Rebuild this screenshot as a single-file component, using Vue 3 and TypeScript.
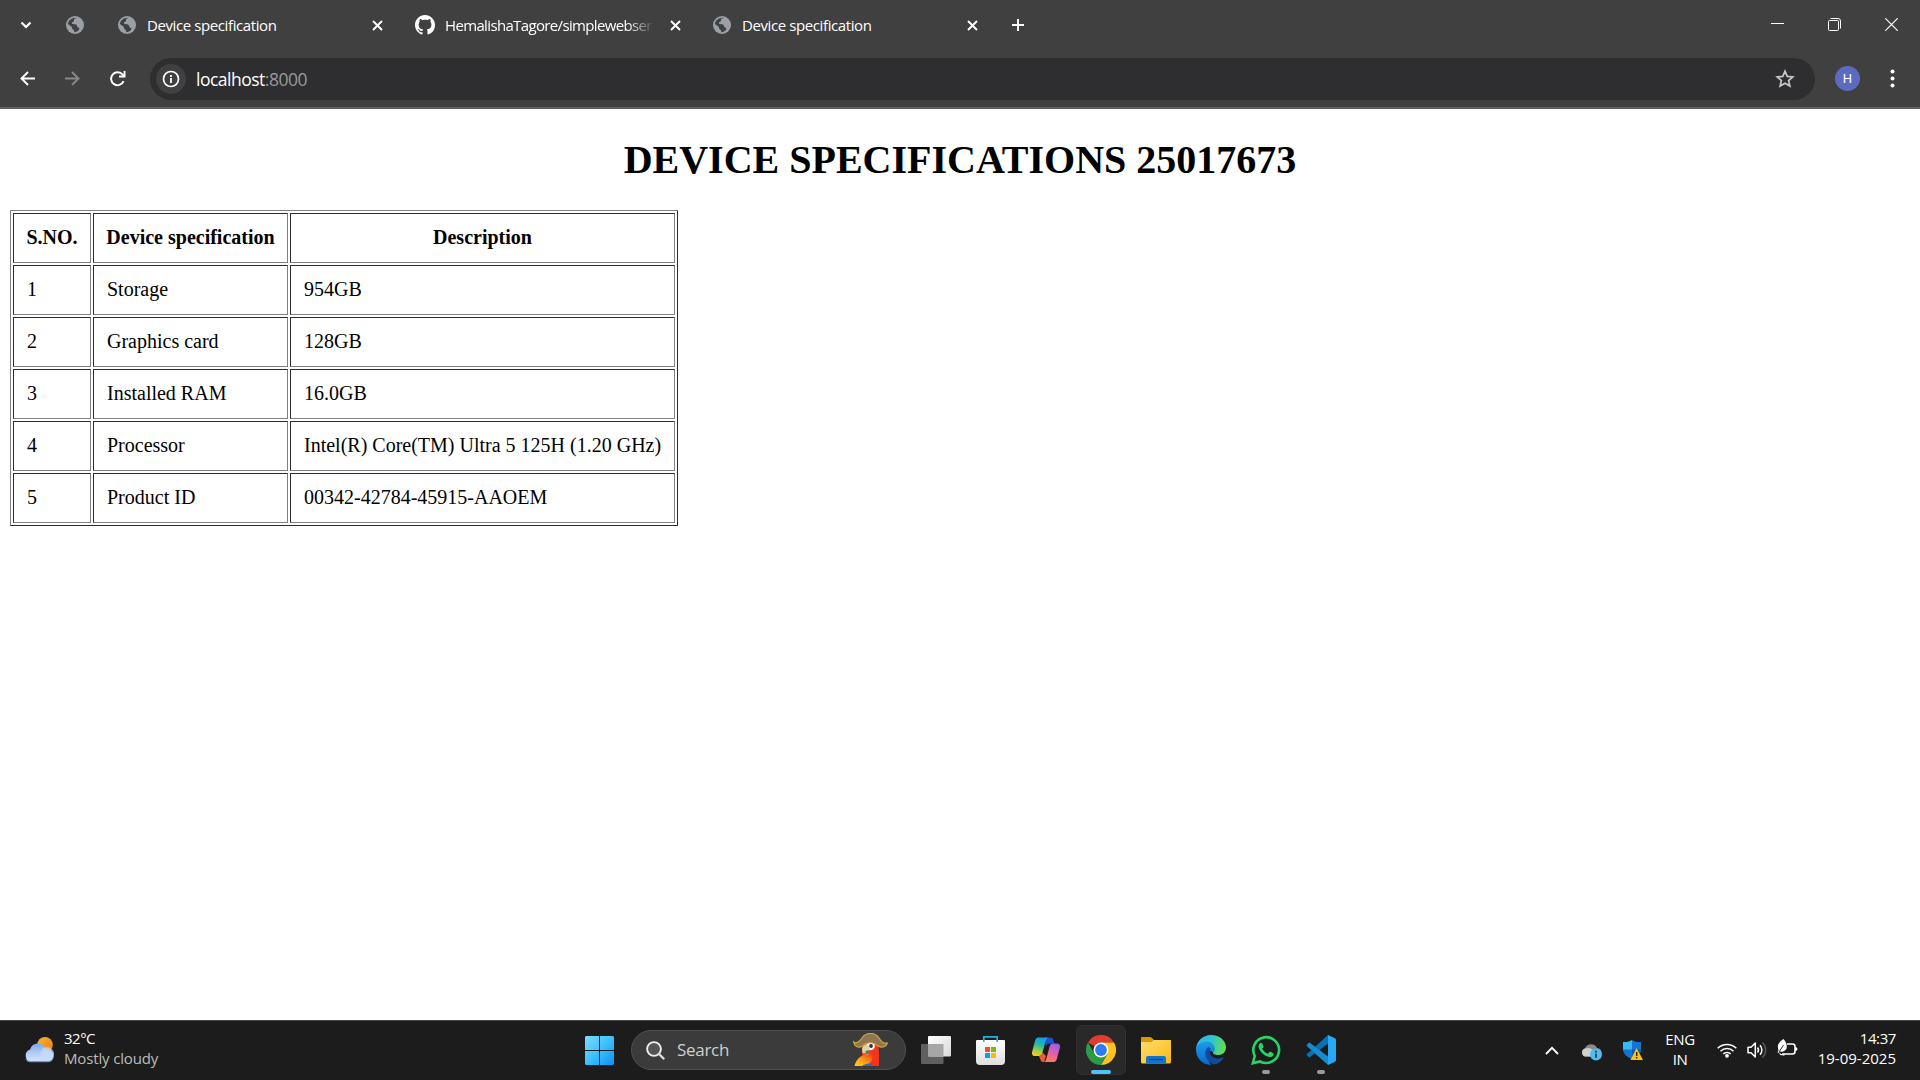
<script setup lang="ts">
interface Tab { kind: 'globe' | 'github'; title: string; cls: string }
interface Spec { no: number; name: string; value: string }

const tabs: Tab[] = [
  { kind: 'globe', title: 'Device specification', cls: 'first' },
  { kind: 'github', title: 'HemalishaTagore/simplewebser', cls: 'second' },
  { kind: 'globe', title: 'Device specification', cls: 'third' },
]

const specs: Spec[] = [
  { no: 1, name: 'Storage', value: '954GB' },
  { no: 2, name: 'Graphics card', value: '128GB' },
  { no: 3, name: 'Installed RAM', value: '16.0GB' },
  { no: 4, name: 'Processor', value: 'Intel(R) Core(TM) Ultra 5 125H (1.20 GHz)' },
  { no: 5, name: 'Product ID', value: '00342-42784-45915-AAOEM' },
]
</script>

<template>
  <div class="screen">
    <header class="chrome">
      <div class="strip">
        <svg class="chev" width="12" height="8" viewBox="0 0 12 8"><path d="M1.500 1.500 6 6l4.500-4.500" fill="none" stroke="#fff" stroke-width="2.200" /></svg>
        <svg class="globe pinned" width="18" height="18" viewBox="0 0 18 18">
          <circle cx="9" cy="9" r="9" fill="#9aa0a6" />
          <path d="M10.500 1.900C8.500 2.300 7.500 3.400 8 4.600c.5 1.200-2.300 1-2 2.700.3 1.300 3.300.5 4.500 1.700 1 1 .3 2.400 1.700 2.500.9.100 1.500.8 1 1.700-1.300 2.300-3.500 3.100-5.200 3 .8-1.400-.2-2.500-1.300-3-1-.5-.3-2.200-1.400-2.800L1.900 8.100C2.300 4.700 5.500 1.500 10.500 1.900z" fill="#404040" />
        </svg>
        <div v-for="(tab, i) in tabs" :key="i" class="tab" :class="tab.cls">
          <svg v-if="tab.kind === 'globe'" class="globe" width="18" height="18" viewBox="0 0 18 18">
            <circle cx="9" cy="9" r="9" fill="#9aa0a6" />
            <path d="M10.500 1.900C8.500 2.300 7.500 3.400 8 4.600c.5 1.200-2.300 1-2 2.700.3 1.300 3.300.5 4.500 1.700 1 1 .3 2.400 1.700 2.500.9.100 1.500.8 1 1.700-1.300 2.300-3.500 3.100-5.200 3 .8-1.400-.2-2.500-1.300-3-1-.5-.3-2.200-1.400-2.800L1.900 8.100C2.300 4.700 5.500 1.500 10.500 1.900z" fill="#404040" />
          </svg>
          <svg v-else class="octo" width="20" height="20" viewBox="0 0 16 16"><path fill="#fff" d="M8 0C3.580 0 0 3.580 0 8c0 3.540 2.290 6.530 5.470 7.590.4.070.55-.17.55-.38 0-.19-.01-.82-.01-1.490-2.010.37-2.530-.49-2.690-.94-.09-.23-.48-.94-.82-1.130-.28-.15-.68-.52-.01-.53.63-.01 1.080.58 1.230.82.72 1.210 1.870.87 2.330.66.070-.52.28-.87.51-1.070-1.780-.2-3.640-.89-3.640-3.950 0-.87.31-1.590.82-2.150-.08-.2-.36-1.020.08-2.120 0 0 .67-.21 2.200.82.64-.18 1.320-.27 2-.27s1.360.09 2 .27c1.530-1.040 2.200-.82 2.200-.82.44 1.100.16 1.920.08 2.120.51.56.82 1.270.82 2.150 0 3.070-1.870 3.750-3.650 3.950.29.25.54.73.54 1.480 0 1.070-.01 1.930-.01 2.200 0 .21.15.46.55.38A8.010 8.010 0 0 0 16 8c0-4.420-3.580-8-8-8z" /></svg>
          <span class="tab-title">{{ tab.title }}</span>
          <svg class="tab-x" width="11" height="11" viewBox="0 0 11 11"><path d="M1 1l9 9M10 1l-9 9" stroke="#fff" stroke-width="1.900" /></svg>
        </div>
        <svg class="plus" width="12" height="12" viewBox="0 0 12 12"><path d="M6 0v12M0 6h12" stroke="#fff" stroke-width="1.900" /></svg>
        <div class="winbtns">
          <svg width="13" height="13" viewBox="0 0 13 13"><path d="M0 5.500h13" stroke="#fff" /></svg>
          <svg width="13" height="13" viewBox="0 0 13 13"><path d="M2.500.5h7.500a2.500 2.500 0 0 1 2.500 2.500v7.500" fill="none" stroke="#fff" /><rect x=".5" y="2.500" width="10" height="10" rx="1" fill="none" stroke="#fff" /></svg>
          <svg width="13" height="13" viewBox="0 0 13 13"><path d="M.3.3l12.400 12.400M12.700.3.3 12.700" stroke="#fff" stroke-width="1.200" /></svg>
        </div>
      </div>
      <div class="toolbar">
        <svg class="nav" width="15" height="15" viewBox="0 0 15 15"><path d="M15 7.500H1.500M8 1 1.500 7.500 8 14" fill="none" stroke="#fff" stroke-width="1.900" /></svg>
        <svg class="nav" width="15" height="15" viewBox="0 0 15 15"><path d="M0 7.500h13.500M7 1l6.500 6.500L7 14" fill="none" stroke="#878787" stroke-width="1.900" /></svg>
        <svg class="nav" width="16" height="16" viewBox="0 0 16 16"><path d="M13.600 10.200A6.500 6.500 0 1 1 12.700 3.600L14 5" fill="none" stroke="#fff" stroke-width="2" /><path d="M15.500 0v6.500H9V4.600h4.600V0z" fill="#fff" /></svg>
        <div class="omnibox">
          <span class="info"><svg width="18" height="18" viewBox="0 0 18 18"><circle cx="9" cy="9" r="7.500" fill="none" stroke="#fff" stroke-width="1.700" /><path d="M9 8v5M9 5v1.900" stroke="#fff" stroke-width="1.800" /></svg></span>
          <span class="url">localhost<span class="port">:8000</span></span>
          <svg class="star" width="20" height="20" viewBox="0 0 20 20"><path d="M10 2.200l2.200 5.200 5.600.5-4.200 3.700 1.300 5.500L10 14.200l-4.900 2.900 1.300-5.500L2.200 7.900l5.600-.5z" fill="none" stroke="#c7c7c7" stroke-width="1.700" /></svg>
        </div>
        <span class="avatar">H</span>
        <svg class="dots" width="5" height="19" viewBox="0 0 5 19"><g fill="#fff"><circle cx="2.500" cy="2.500" r="2" /><circle cx="2.500" cy="9.500" r="2" /><circle cx="2.500" cy="16.500" r="2" /></g></svg>
      </div>
    </header>

    <main class="page">
      <h1>DEVICE SPECIFICATIONS 25017673</h1>
      <table>
        <colgroup><col class="c1" /><col class="c2" /><col class="c3" /></colgroup>
        <thead><tr><th>S.NO.</th><th>Device specification</th><th>Description</th></tr></thead>
        <tbody>
          <tr v-for="s in specs" :key="s.no"><td>{{ s.no }}</td><td>{{ s.name }}</td><td>{{ s.value }}</td></tr>
        </tbody>
      </table>
    </main>

    <footer class="taskbar">
      <div class="weather">
        <svg width="30" height="26" viewBox="0 0 30 26">
          <defs>
            <linearGradient id="sun" x1="0" y1="0" x2="1" y2="1"><stop offset="0" stop-color="#f9b52c" /><stop offset="1" stop-color="#ee7b10" /></linearGradient>
            <linearGradient id="cl" x1="0" y1="0" x2="0" y2="1"><stop offset="0" stop-color="#7fa8ee" /><stop offset=".55" stop-color="#b5cdf8" /><stop offset="1" stop-color="#d9e6fb" /></linearGradient>
          </defs>
          <circle cx="21" cy="7.800" r="7.800" fill="url(#sun)" />
          <path d="M7 25a6.500 6.500 0 0 1-1-12.500 8.500 8.500 0 0 1 16-.5 6.500 6.500 0 0 1 1.500 13z" fill="url(#cl)" />
          <path d="M16 16a7 7 0 0 1 14 2.500 6.500 6.500 0 0 1-6.500 6.500H7C14 24 21 22 16 16z" fill="#c9dbfb" opacity=".7" />
          <path d="M1 21a6 6 0 0 0 6 4.200h16.500a6 6 0 0 0 6-4.200 7 7 0 0 1-6 3H7a7 7 0 0 1-6-3z" fill="#6f93dc" />
        </svg>
        <div class="wtext"><span class="w1">32°C</span><span class="w2">Mostly cloudy</span></div>
      </div>

      <div class="apps">
        <svg class="start" width="29" height="29" viewBox="0 0 29 29">
          <defs><linearGradient id="win" gradientUnits="userSpaceOnUse" x1="0" y1="0" x2="29" y2="29"><stop offset="0" stop-color="#7cdcff" /><stop offset=".5" stop-color="#3cc1fb" /><stop offset="1" stop-color="#0a90f6" /></linearGradient></defs>
          <path d="M1 0h13v14H0V1zM15 0h13l1 1v13H15zM0 15h14v14H1l-1-1zM15 15h14v13l-1 1H15z" fill="url(#win)" />
        </svg>
        <div class="search">
          <svg class="mag" width="19" height="19" viewBox="0 0 19 19"><circle cx="8" cy="8" r="6.900" fill="#555" stroke="#eee" stroke-width="1.900" /><path d="M13 13l4.500 4.500" stroke="#ddd" stroke-width="2.400" stroke-linecap="round" /></svg>
          <span class="stext">Search</span>
          <svg class="parrot" width="35" height="34" viewBox="0 0 35 34">
            <defs><linearGradient id="wing" x1="0" y1="1" x2="1" y2="0"><stop offset="0" stop-color="#ffd21f" /><stop offset=".45" stop-color="#ff9d17" /><stop offset="1" stop-color="#f0311a" /></linearGradient></defs>
            <path d="M10 12C11 7 22 6 25 12l1 7v14H14L9 22z" fill="#f2351d" />
            <path d="M1.500 33C3 26 8 21 19 20c2 5-1 11-7 13z" fill="url(#wing)" />
            <path d="M9 33c3-2 6-3 10-2l-1 2z" fill="#3268b4" />
            <circle cx="17.500" cy="13" r="4.300" fill="#fff" /><circle cx="18" cy="13" r="1.900" fill="#332c2c" />
            <path d="M14.500 12C10 11 8 15 9.700 20c1 1 2 .5 2.500-.5 1 3 3 3 4-.5 1-3 .5-6-1.700-7z" fill="#ded1a8" />
            <path d="M12.500 18c0 4 3 5 4.500-1z" fill="#716958" />
            <path d="M.7 9C3 11 6 9 9 5c4-6 13-6 17 0 2.500 4 5 6 8.300 5-1 3.500-5 5.500-9 3C20 8.500 14.500 8.500 9.500 13 6 15.500 1.500 14 .7 9z" fill="#8f7551" stroke="#d1a83a" stroke-width="1.200" />
          </svg>
        </div>
        <svg class="taskview" width="30" height="28" viewBox="0 0 30 28">
          <defs><linearGradient id="tv" x1="0" y1="0" x2="1" y2="1"><stop offset="0" stop-color="#fff" /><stop offset="1" stop-color="#d8d8d8" /></linearGradient></defs>
          <rect x="0" y="8" width="22.500" height="20" rx="1" fill="#606060" /><rect x="7" y="0" width="23" height="20.500" rx="1" fill="url(#tv)" /><path d="M7 8h15.500v12.500H8l-1-1z" fill="#a6a6a6" />
        </svg>
        <svg class="store" width="29" height="29" viewBox="0 0 29 29">
          <defs><linearGradient id="bag" x1="0" y1="0" x2="0" y2="1"><stop offset="0" stop-color="#fff" /><stop offset="1" stop-color="#dedede" /></linearGradient></defs>
          <path d="M0 5q0-1 1-1h27q1 0 1 1v20a4 4 0 0 1-4 4H4a4 4 0 0 1-4-4z" fill="url(#bag)" />
          <path d="M7.800 6V.8h13.400V6" fill="none" stroke="#24b1e0" stroke-width="1.700" />
          <path d="M9 11h5v5H9z" fill="#f25022" /><path d="M15 11h5v5h-5z" fill="#7fba00" /><path d="M9 17h5v5H9z" fill="#00a4ef" /><path d="M15 17h5v5h-5z" fill="#ffb900" />
        </svg>
        <svg class="copilot" width="28" height="26" viewBox="0 0 28 26">
          <defs>
            <linearGradient id="cpa" x1=".6" y1="0" x2=".3" y2="1"><stop offset="0" stop-color="#149ce9" /><stop offset=".4" stop-color="#22bba8" /><stop offset=".75" stop-color="#a4ce41" /><stop offset="1" stop-color="#ffc91c" /></linearGradient>
            <linearGradient id="cpb" x1=".7" y1="0" x2=".3" y2="1"><stop offset="0" stop-color="#9a5cf0" /><stop offset=".5" stop-color="#e45eac" /><stop offset="1" stop-color="#ff7f50" /></linearGradient>
          </defs>
          <path d="M13 .5h5c2 0 3 1 3.500 3l1 3h-5c-2 0-3 1-3.500 3z" fill="#1b54d0" />
          <path d="M6 .5h10c-1.500 1-2 2-2.500 4l-3 11C9.800 18 9 19 7 19H3c-2.500 0-3.500-2-2.800-4.500L3 4c.6-2.200 1.500-3.500 3-3.500z" fill="url(#cpa)" />
          <path d="M7 19c2 0 2.800-1 3.500-3.500L14 19l-2 6c-2 0-3-.5-3.600-2.500z" fill="#f15b34" />
          <path d="M22 25H12c1.500-1 2-2 2.500-4l3-11c.7-2.500 1.500-3.500 3.500-3.500h4c2.500 0 3.500 2 2.800 4.500L25 21.500c-.6 2.200-1.500 3.500-3 3.500z" fill="url(#cpb)" />
        </svg>
        <div class="active">
          <svg width="30" height="30" viewBox="0 0 30 30">
            <path d="M15 15 2 7.500A15 15 0 0 1 28 7.500H15z" fill="#e53a2e" />
            <path d="M15 7.500h13A15 15 0 0 1 15 30l6.500-11.300z" fill="#fcc31e" />
            <path d="M2 7.500A15 15 0 0 0 15 30l6.500-11.300L15 15 8.500 18.700z" fill="#2a9c48" />
            <circle cx="15" cy="15" r="7.500" fill="#fff" /><circle cx="15" cy="15" r="5.900" fill="#2c7bf0" />
          </svg>
          <i class="bar"></i>
        </div>
        <svg class="folder" width="30" height="27" viewBox="0 0 30 27">
          <defs><linearGradient id="fo" x1="0" y1="0" x2="1" y2="1"><stop offset="0" stop-color="#ffdc72" /><stop offset="1" stop-color="#fcb90f" /></linearGradient></defs>
          <path d="M0 1q0-1 1-1h8q1 0 2 1l2 2h16q1 0 1 1v6H0z" fill="#dd9706" /><path d="M0 5h10l3-2h16q1 0 1 1v21q0 1.500-1.500 1.500h-27Q0 26.500 0 25z" fill="url(#fo)" />
          <path d="M5 26.500V21q0-2 2-2h16q2 0 2 2v5.500z" fill="#1175cb" /><path d="M8 22.500h14" stroke="#0a4b8e" stroke-width="1.300" />
        </svg>
        <svg class="edge" width="30" height="30" viewBox="0 0 30 30">
          <defs>
            <linearGradient id="ea" x1="0" y1=".3" x2="1" y2=".5"><stop offset="0" stop-color="#2cb3ee" /><stop offset=".5" stop-color="#2fc5cf" /><stop offset="1" stop-color="#66dd4c" /></linearGradient>
            <linearGradient id="eb" x1="0" y1="0" x2="0" y2="1"><stop offset="0" stop-color="#1d9de8" /><stop offset="1" stop-color="#0768ca" /></linearGradient>
          </defs>
          <path d="M0 15C0 6.500 6.500 0 15 0c9 0 15 6 15 12.500 0 5-4 7.500-8 7.500-3 0-5.500-1-5-2.500 2-2.500.5-7.500-4-7.500z" fill="url(#ea)" />
          <path d="M0 15c.5-5 5-8.500 10.500-8.500 5 0 8.300 3.500 8.300 7 0 2-1 3-1.700 4C12 13 8 20 15 29.900 6.500 30 0 23 0 15z" fill="url(#eb)" />
          <path d="M11 13c-4 5-1 14 7 16.600 4-.6 8-3.500 9.500-6.500.4-.8-.2-1-.8-.7C20 25.500 12 21 14.500 14.500 15 12 12.500 11.500 11 13z" fill="#124b9a" />
        </svg>
        <div class="wa">
          <svg width="30" height="30" viewBox="0 0 24 24"><path fill="#25d366" d="M17.472 14.382c-.297-.149-1.758-.867-2.030-.967-.273-.099-.471-.148-.670.150-.197.297-.767.966-.940 1.164-.173.199-.347.223-.644.075-.297-.150-1.255-.463-2.390-1.475-.883-.788-1.480-1.761-1.653-2.059-.173-.297-.018-.458.130-.606.134-.133.298-.347.446-.520.149-.174.198-.298.298-.497.099-.198.050-.371-.025-.520-.075-.149-.669-1.612-.916-2.207-.242-.579-.487-.500-.669-.510-.173-.008-.371-.010-.570-.010-.198 0-.520.074-.792.372-.272.297-1.040 1.016-1.040 2.479 0 1.462 1.065 2.875 1.213 3.074.149.198 2.096 3.200 5.077 4.487.709.306 1.262.489 1.694.625.712.227 1.360.195 1.871.118.571-.085 1.758-.719 2.006-1.413.248-.694.248-1.289.173-1.413-.074-.124-.272-.198-.570-.347z" /><path fill="none" stroke="#25d366" stroke-width="2.100" d="M1.500 22.500l1.500-5.700A10.300 10.300 0 1 1 7.200 21.100z" /></svg>
          <i class="dot"></i>
        </div>
        <div class="code">
          <svg width="30" height="30" viewBox="0 0 30 30"><path d="M22 0 5 15.500l-4 3.200q-.8.500-.3 1.300l1.800 2q.8.700 1.600 0L22 8.500z" fill="#0b6fb5" /><path d="M22 30 1 11.300q-.8-.6-.2-1.400L2.500 8q.8-.8 1.700-.1L22 21.500z" fill="#168bd2" /><path d="M22 0l7 3.300q1 .5 1 1.600v20.200q0 1.100-1 1.600L22 30z" fill="#2aa8f5" /></svg>
          <i class="dot"></i>
        </div>
      </div>

      <div class="tray">
        <svg class="up" width="14" height="9" viewBox="0 0 14 9"><path d="M1 8l6-6.200L13 8" fill="none" stroke="#fff" stroke-width="1.800" /></svg>
        <svg class="cloud" width="21" height="18" viewBox="0 0 21 18"><path d="M4 13.500a4.200 4.200 0 0 1 0-8C6 0 14 0 16 5a4.500 4.500 0 0 1 2 8.500z" fill="#8a8a8a" /><path d="M4 13.500a4.200 4.200 0 0 1 0-8c4-1.500 7 0 9 3v5z" fill="#d0d0d0" /><circle cx="15" cy="11.500" r="6" fill="#50bdf2" /><path d="M15 10.500v4.300M15 7.800v1.700" stroke="#12364a" stroke-width="1.700" /></svg>
        <svg class="shield" width="20" height="21" viewBox="0 0 20 21"><path d="M9 0c3 2 6 2.300 9 2v7c0 5-4 8-9 10-5-2-9-5-9-10V2c3 .3 6 0 9-2z" fill="#1274d4" /><path d="M9 0v9.500H0V2c3 .3 6 0 9-2z" fill="#35b9f1" /><path d="M9 9.500h9c0 5-4 7.500-9 9.500z" fill="#0c59b0" /><path d="M13.500 8 20 20H7.500z" fill="#fcc21b" /><path d="M13.700 12v4M13.700 17v1.600" stroke="#3b2b00" stroke-width="1.500" /></svg>
        <div class="lang"><span>ENG</span><span>IN</span></div>
        <svg class="wifi" width="20" height="16" viewBox="0 0 20 16"><g fill="none" stroke="#fff" stroke-width="1.500"><path d="M.7 6.300a13 13 0 0 1 18.600 0M3.500 9.200a9.200 9.200 0 0 1 13 0M6.300 11.900a5.300 5.300 0 0 1 7.400 0" /></g><circle cx="10" cy="13.800" r="1.900" fill="#fff" /></svg>
        <svg class="vol" width="20" height="18" viewBox="0 0 20 18"><g fill="none" stroke="#fff" stroke-width="1.500"><path d="M1 6.200h3L8.300 2v14L4 11.800H1z" stroke-linejoin="round" /><path d="M10.500 6.500a4 4 0 0 1 0 5M13 4.200a7 7 0 0 1 0 9.600" /><path d="M15.500 1.500a10.500 10.500 0 0 1 0 15" stroke="#595959" /></g></svg>
        <svg class="batt" width="21" height="18" viewBox="0 0 21 18"><path d="M10 5h5.500A2.500 2.500 0 0 1 18 7.500v5a2.500 2.500 0 0 1-2.500 2.500H5" fill="none" stroke="#fff" stroke-width="1.600" /><path d="M18 8q2.500.2 2.500 2t-2.500 2z" fill="#fff" /><path d="M6.500 0C9 3 10.500 6 9.500 9.500 8.700 12 6 13 3 12.500L1.500 14 .5 13l1-1.500C0 7 1 3.500 6.500 0z" fill="#fff" /><path d="M2 13 6.500 6M5 15.800 4 13" stroke="#1c1c1c" stroke-width=".9" /><path d="M2.500 14.500c1 1.500 3 1.500 5 1.300" stroke="#fff" stroke-width="1.300" fill="none" /></svg>
        <div class="clock"><span class="k1">14:37</span><span class="k2">19-09-2025</span></div>
      </div>
    </footer>
  </div>
</template>

<style>
body { margin: 0; overflow: hidden; }
</style>

<style scoped>
.screen { width: 1920px; height: 1080px; display: flex; flex-direction: column; background: #fff; font-family: "Open Sans", "Noto Sans", sans-serif; overflow: hidden; }
svg { display: block; flex: none; }
.chrome { height: 107px; flex: none; background: #404040; border-bottom: 2px solid #636262; }
.strip { height: 50px; display: flex; align-items: center; }
.chev { margin-left: 20px; }
.pinned { margin-left: 34px; }
.tab { display: flex; align-items: center; color: #fff; font-size: 15px; white-space: nowrap; }
.tab.first { margin-left: 34px; }
.tab.second { margin-left: 32px; }
.tab.third { margin-left: 32px; }
.tab-title { width: 214px; margin-left: 11px; overflow: hidden; line-height: 24px; letter-spacing: -0.4px; }
.second .tab-title { width: 209px; margin-left: 10px; letter-spacing: -0.65px; -webkit-mask-image: linear-gradient(90deg, #000 87%, transparent 100%); mask-image: linear-gradient(90deg, #000 87%, transparent 100%); }
.tab-x { margin-left: 11px; }
.second .tab-x { margin-left: 16px; }
.plus { margin-left: 34px; }
.winbtns { display: flex; gap: 44px; margin-left: auto; margin-right: 22px; margin-bottom: 1px; }
.toolbar { height: 57px; display: flex; align-items: center; padding-left: 20px; }
.nav { margin-right: 30px; }
.nav:nth-child(3) { margin-right: 24px; }
.omnibox { width: 1665px; height: 42px; margin-top: 1px; border-radius: 21px; background: #2e2e30; display: flex; align-items: center; flex: none; }
.info { width: 30px; height: 30px; margin-left: 6px; border-radius: 50%; background: #404040; display: flex; align-items: center; justify-content: center; }
.url { margin-left: 10px; color: #fff; font-size: 17.500px; letter-spacing: -0.5px; }
.port { color: #999; }
.star { margin-left: auto; margin-right: 20px; }
.avatar { width: 25px; height: 25px; margin-left: 20px; border-radius: 50%; background: #5c6bc0; color: #fff; font: 13px/25px Roboto, sans-serif; text-align: center; flex: none; }
.dots { margin-left: 30px; }
.page { height: 911px; flex: none; padding: 0 10px; box-sizing: border-box; display: flex; flex-direction: column; align-items: flex-start; font-family: "Liberation Serif", "Times New Roman", serif; color: #000; }
h1 { align-self: stretch; margin: 28px 0 27px; font-size: 40px; line-height: 46px; font-weight: bold; text-align: center; }
table { width: 668px; table-layout: fixed; border: 1px solid; border-color: #808080 #2c2c2c #2c2c2c #808080; border-spacing: 2px; font-size: 20px; line-height: 23px; }
.c1 { width: 78px; } .c2 { width: 195px; } .c3 { width: 385px; }
th, td { height: 50px; box-sizing: border-box; padding: 0 0 2px 13px; border: 1px solid; border-color: #2c2c2c #808080 #808080 #2c2c2c; white-space: nowrap; }
th { padding: 0 0 2px; }
.taskbar { height: 60px; flex: none; box-sizing: border-box; border-top: 1px solid #454747; padding-bottom: 1px; background: #1c1c1c; color: #fff; display: flex; align-items: center; font-size: 15px; line-height: 20px; }
.weather { display: flex; align-items: center; width: 561px; padding-left: 24px; }
.wtext { margin: -4px 0 0 10px; display: flex; flex-direction: column; }
.w1 { letter-spacing: -0.5px; }
.w2 { color: #bdbdbd; letter-spacing: -0.15px; }
.apps { display: flex; align-items: center; width: 751px; }
.search { width: 275px; height: 40px; margin-left: 17px; box-sizing: border-box; border: 1px solid #505050; border-radius: 20px; background: #3b3b3b; display: flex; align-items: center; }
.mag { margin-left: 14px; }
.stext { margin-left: 12px; font-size: 17px; color: #cfcfcf; letter-spacing: -0.3px; }
.parrot { margin-left: auto; margin-right: 17px; }
.taskview { margin-left: 15px; }
.store { margin-left: 25px; }
.copilot { margin-left: 27px; }
.active { width: 50px; height: 50px; box-sizing: border-box; border: 1px solid #303030; margin-left: 16px; border-radius: 6px; background: #292929; display: flex; align-items: center; justify-content: center; position: relative; }
.bar, .dot { position: absolute; height: 4px; border-radius: 2px; }
.bar { left: 14px; bottom: 0; width: 20px; background: #4cc2ff; }
.folder { margin-left: 15px; }
.edge, .wa, .code { margin-left: 25px; }
.wa, .code { position: relative; }
.dot { left: 11px; top: 35px; width: 8px; background: #9a9a9a; }
.tray { flex: 1; display: flex; align-items: center; padding-right: 24px; padding-left: 209px; }
.cloud { margin-left: 22px; margin-top: 3px; }
.shield { margin-left: 21px; }
.lang { width: 48px; margin: -2px 0 0 13px; display: flex; flex-direction: column; text-align: center; letter-spacing: -0.4px; }
.wifi { margin-left: 13px; margin-top: -1px; }
.vol { margin-left: 10px; margin-top: -1px; }
.batt { margin-left: 10px; margin-top: -4px; }
.clock { margin: -4px 0 0 auto; display: flex; flex-direction: column; text-align: right; letter-spacing: 0; }
.k1 { letter-spacing: -0.4px; }
</style>
